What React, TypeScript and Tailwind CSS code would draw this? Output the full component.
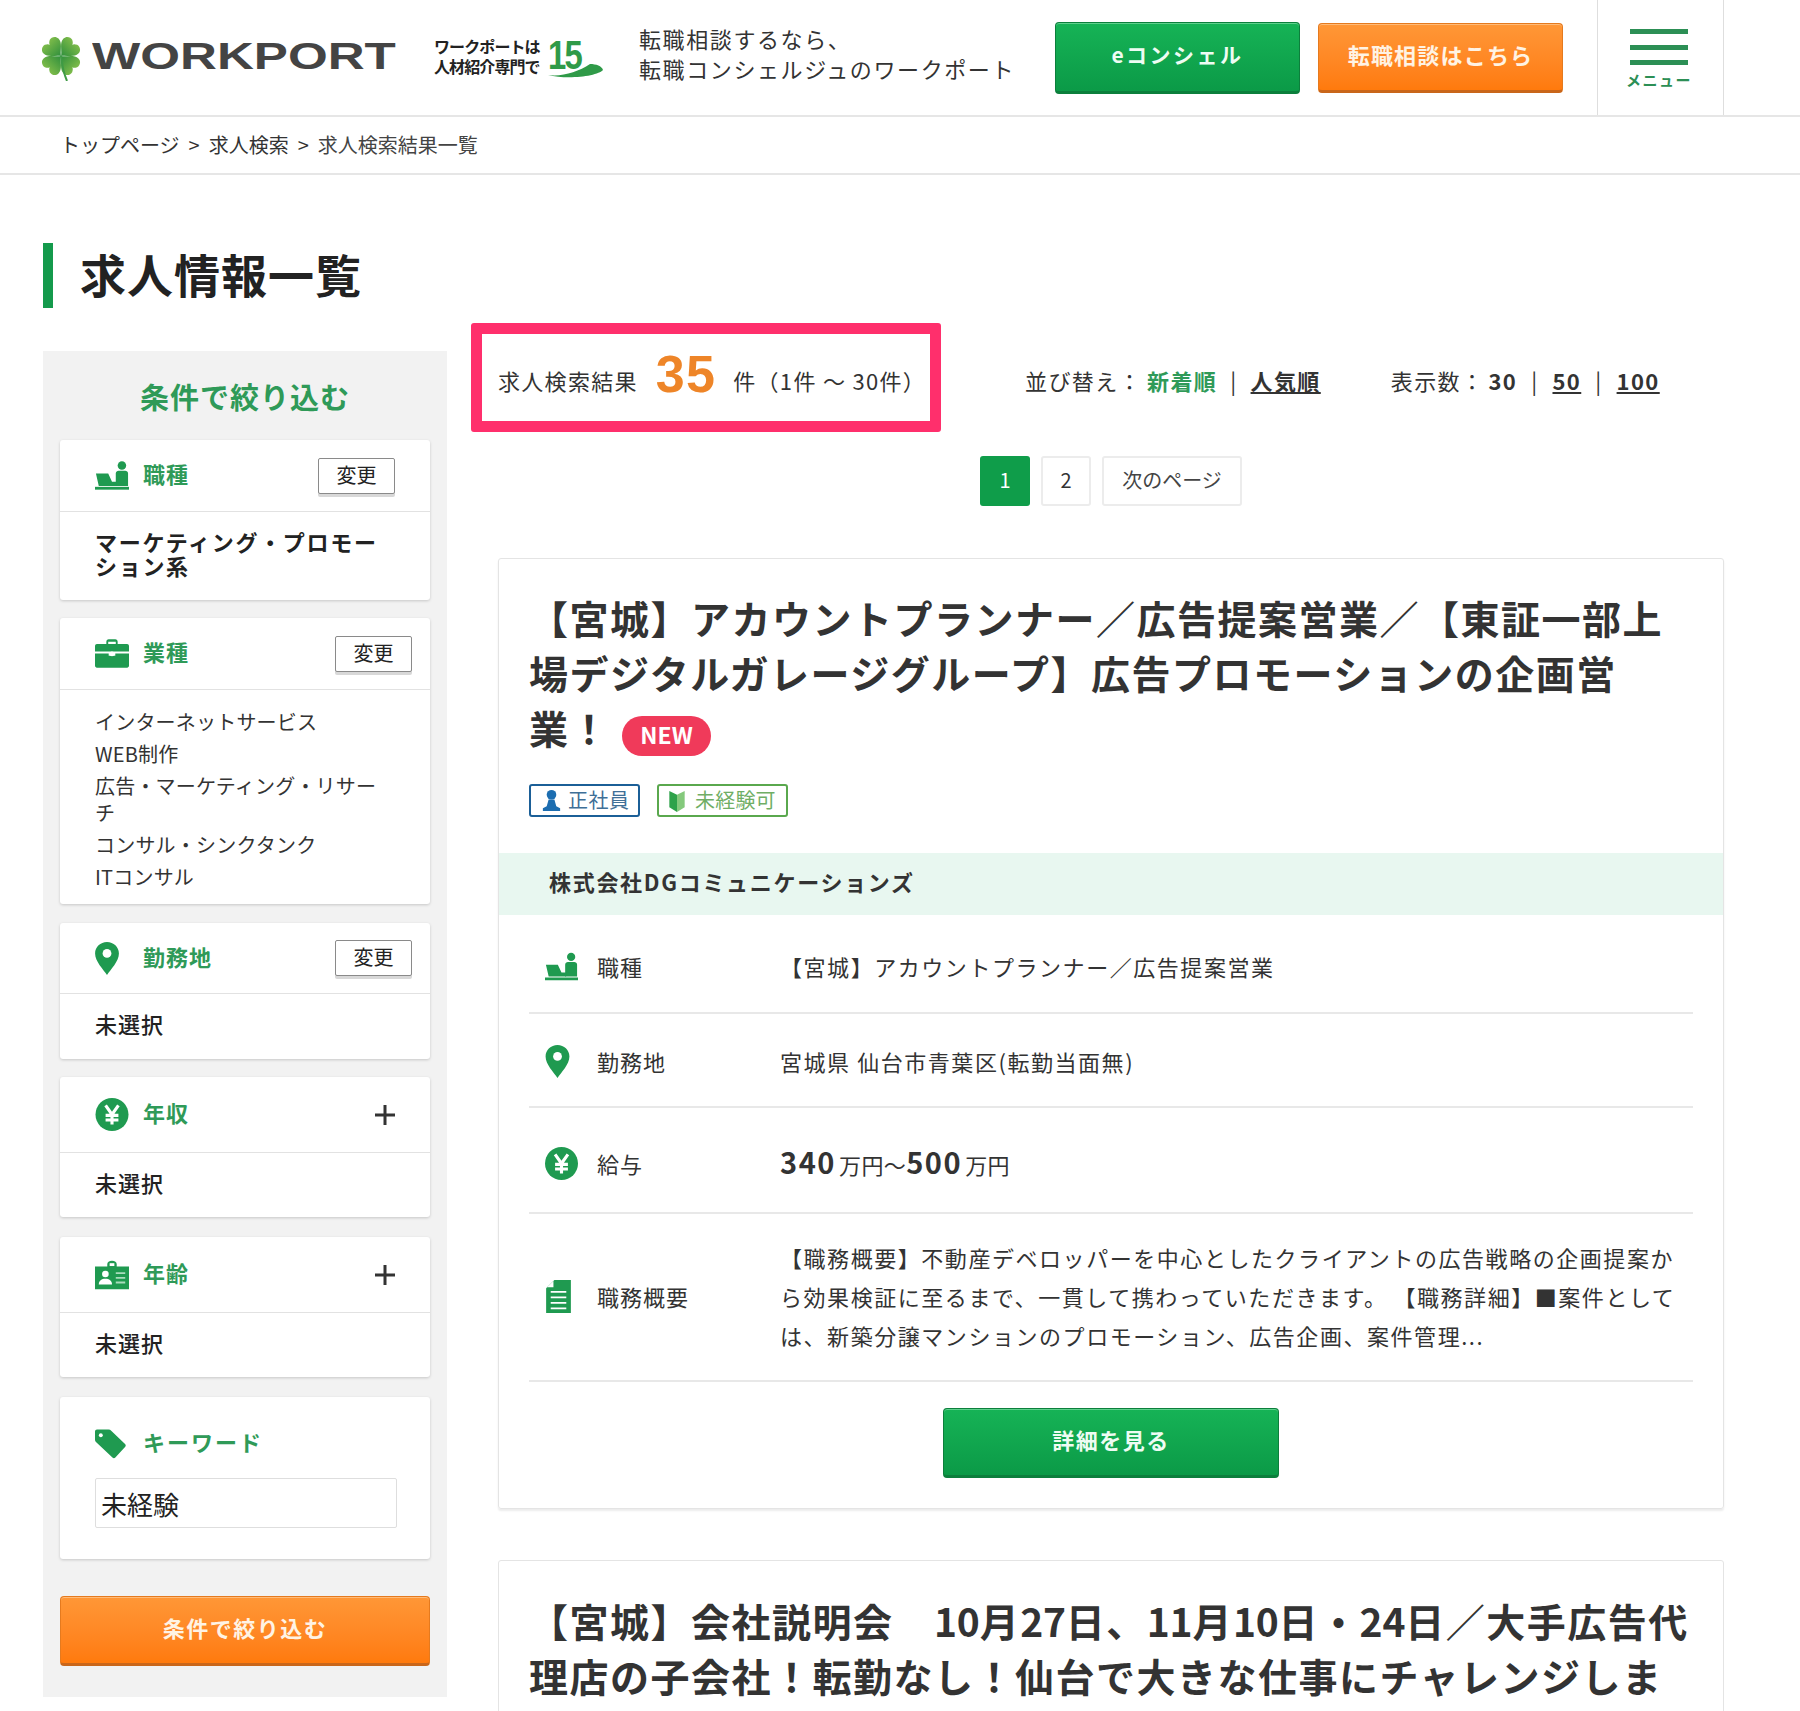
const FONT = "font-['Noto_Sans_CJK_JP','Noto_Sans',sans-serif]";

function Clover() {
  const leaf = "M0 0C-3 -5 -12 -9 -12 -16C-12 -21 -7 -23 -4 -22C-2 -21 -.5 -20 0 -18C.5 -20 2 -21 4 -22C7 -23 12 -21 12 -16C12 -9 3 -5 0 0Z";
  return (
    <svg viewBox="0 0 40 46" className="h-[46px] w-[40px] shrink-0">
      <defs>
        <linearGradient id="clover" x1="0" y1="0" x2="0" y2="1">
          <stop offset="0" stopColor="#7dbb4a" />
          <stop offset="1" stopColor="#2f8f3c" />
        </linearGradient>
      </defs>
      <path fill="url(#clover)" transform="translate(20 21) rotate(-45) scale(.88)" d={leaf} />
      <path fill="url(#clover)" transform="translate(20 21) rotate(45) scale(.88)" d={leaf} />
      <path fill="url(#clover)" transform="translate(20 21) rotate(-135) scale(.88)" d={leaf} />
      <path fill="url(#clover)" transform="translate(20 21) rotate(135) scale(.88)" d={leaf} />
      <path d="M20 21C21 30 23 39 26 46" stroke="#3f9a45" strokeWidth="2" fill="none" />
    </svg>
  );
}

function DeskIcon({ className }: { className: string }) {
  return (
    <svg viewBox="0 0 36 30" className={className} fill="#1f9a50">
      <circle cx="28.500" cy="4.500" r="4.500" />
      <path d="M22 13c0-2 1.500-3 3-3h7c1.500 0 3 1 3 3v13H22z" />
      <path d="M1 13h13l4 8.500h5V26H4z" />
      <rect x="0" y="27" width="36" height="3" />
    </svg>
  );
}

function BagIcon({ className }: { className: string }) {
  return (
    <svg viewBox="0 0 36 30" className={className} fill="#1f9a50">
      <path d="M12 5V2.500C12 1 13 0 14.500 0h7C23 0 24 1 24 2.500V5h-2V2.500h-8V5z" />
      <path d="M2 5h32c1 0 2 1 2 2v6H0V7c0-1 1-2 2-2z" />
      <path d="M0 15h14.500v2.500h7V15H36v13c0 1-1 2-2 2H2c-1 0-2-1-2-2z" />
      <circle cx="18" cy="15.500" r="2.500" fill="#fff" />
    </svg>
  );
}

function PinIcon({ className }: { className: string }) {
  return (
    <svg viewBox="0 0 26 36" className={className}>
      <path fill="#1f9a50" d="M13 0C5.800 0 0 5.500 0 12.500C0 21 9 30 13 36C17 30 26 21 26 12.500C26 5.500 20.200 0 13 0Z" />
      <circle cx="13" cy="12.500" r="4.800" fill="#fff" />
    </svg>
  );
}

function YenIcon({ className }: { className: string }) {
  return (
    <svg viewBox="0 0 36 36" className={className}>
      <circle cx="18" cy="18" r="18" fill="#1f9a50" />
      <path d="M11 8l7 10 7-10M18 18v11M11 19h14M11 24h14" stroke="#fff" strokeWidth="3.400" fill="none" />
    </svg>
  );
}

function CardIcon({ className }: { className: string }) {
  return (
    <svg viewBox="0 0 36 30" className={className}>
      <path fill="#1f9a50" d="M0 6h13V3.500C13 1.500 15 0 18 0s5 1.500 5 3.500V6h13v24H0z" />
      <rect x="15.500" y="2.500" width="5" height="3" fill="#fff" />
      <circle cx="11" cy="14" r="3.500" fill="#fff" />
      <path d="M4 25c0-4 3-6 7-6s7 2 7 6z" fill="#fff" />
      <path d="M22 13h10M22 18h10M22 23h10" stroke="#a9dcbc" strokeWidth="2" />
    </svg>
  );
}

function DocIcon({ className }: { className: string }) {
  return (
    <svg viewBox="0 0 27 36" className={className}>
      <path fill="#1f9a50" d="M9 0H27V36H0V9z" />
      <path d="M5 13h17M5 19h17M5 25h17M5 31h17" stroke="#fff" strokeWidth="2" />
      <path d="M8 1v7H1z" fill="#fff" />
    </svg>
  );
}

function TagIcon({ className }: { className: string }) {
  return (
    <svg viewBox="0 0 32 30" className={className}>
      <path fill="#1f9a50" d="M2 0h12c1 0 2 .5 3 1.500L31 15c1 1 1 2 0 3L21 29c-1 1-2 1-3 0L1 13c-.7-.7-1-1.500-1-2.500V2C0 1 1 0 2 0Z" />
      <circle cx="6" cy="6" r="2" fill="#fff" />
    </svg>
  );
}

function GreenButton({ className, children }: { className: string; children: React.ReactNode }) {
  return (
    <a className={`flex items-center justify-center rounded-[4px] border border-[#0c7f3c] border-b-[3px] bg-gradient-to-b from-[#16b356] to-[#0b9a47] pb-[5px] font-bold text-[#eefcf3] shadow-[inset_0_1px_0_#5fd08d] ${className}`}>
      {children}
    </a>
  );
}

function OrangeButton({ className, children }: { className: string; children: React.ReactNode }) {
  return (
    <a className={`flex items-center justify-center rounded-[4px] border border-[#e57a1e] border-b-[3px] border-b-[#c9661a] bg-gradient-to-b from-[#ff9736] to-[#ff7a0c] pb-[5px] font-bold text-[#fff3e4] shadow-[inset_0_1px_0_#ffbb78] ${className}`}>
      {children}
    </a>
  );
}

function ChangeButton({ className }: { className: string }) {
  return (
    <button className={`flex h-[36px] w-[77px] items-center justify-center rounded-[2px] border border-[#8a8a8a] bg-white pb-[2px] text-[20px] text-[#222] shadow-[0_3px_0_#d8d8d8] ${className}`}>
      変更
    </button>
  );
}

function SideCard({ header, children, className }: { header: React.ReactNode; children: React.ReactNode; className: string }) {
  return (
    <section className={`rounded-[3px] bg-white shadow-[0_1px_3px_rgba(0,0,0,0.18)] ${className}`}>
      <div className="relative flex items-center border-b border-[#e2e2e2] pl-[35px]">{header}</div>
      {children}
    </section>
  );
}

function SideLabel({ children, className }: { children: React.ReactNode; className: string }) {
  return <span className={`mb-[4px] text-[22px] font-bold tracking-[1px] text-[#2f9a58] ${className}`}>{children}</span>;
}

function Unselected() {
  return <p className="pl-[35px] text-[22px] font-medium leading-[59px] tracking-[1px] text-[#222]">未選択</p>;
}

function Plus() {
  return (
    <svg viewBox="0 0 20 20" className="absolute right-[35px] top-1/2 h-[20px] w-[20px] -translate-y-1/2" stroke="#333" strokeWidth="3">
      <path d="M0 10h20M10 0v20" />
    </svg>
  );
}

function Sidebar() {
  const industries = ["インターネットサービス", "WEB制作", "広告・マーケティング・リサーチ", "コンサル・シンクタンク", "ITコンサル"];
  return (
    <aside className="mt-[28px] h-[1346px] w-[404px] shrink-0 bg-[#f2f2f2] px-[17px] pt-[23px]">
      <h2 className="mb-[22px] text-center text-[29px] font-bold leading-[44px] tracking-[1px] text-[#2f9a58]">条件で絞り込む</h2>
      <SideCard className="h-[160px]" header={
        <div className="flex h-[71px] items-center">
          <DeskIcon className="h-[29px] w-[34px]" />
          <SideLabel className="ml-[14px]">職種</SideLabel>
          <ChangeButton className="absolute right-[35px] top-[18px]" />
        </div>
      }>
        <p className="mt-[17px] box-content w-[300px] pl-[35px] text-[22px] font-bold leading-[24px] tracking-[1.700px] text-[#222]">マーケティング・プロモーション系</p>
      </SideCard>
      <SideCard className="mt-[18px] h-[286px]" header={
        <div className="flex h-[71px] items-center">
          <BagIcon className="h-[29px] w-[34px]" />
          <SideLabel className="ml-[14px]">業種</SideLabel>
          <ChangeButton className="absolute right-[18px] top-[18px]" />
        </div>
      }>
        <ul className="mt-[18px] box-content w-[285px] pl-[35px] text-[20px] leading-[27px] tracking-[0.200px] text-[#333]">
          {industries.map((name) => <li key={name} className="pb-[5px]">{name}</li>)}
        </ul>
      </SideCard>
      <SideCard className="mt-[19px] h-[136px]" header={
        <div className="flex h-[70px] items-center">
          <PinIcon className="h-[33px] w-[24px]" />
          <SideLabel className="ml-[24px]">勤務地</SideLabel>
          <ChangeButton className="absolute right-[18px] top-[17px]" />
        </div>
      }>
        <Unselected />
      </SideCard>
      <SideCard className="mt-[18px] h-[140px]" header={
        <div className="flex h-[75px] items-center">
          <YenIcon className="h-[33px] w-[34px]" />
          <SideLabel className="ml-[14px]">年収</SideLabel>
          <Plus />
        </div>
      }>
        <Unselected />
      </SideCard>
      <SideCard className="mt-[20px] h-[140px]" header={
        <div className="flex h-[75px] items-center">
          <CardIcon className="h-[30px] w-[34px]" />
          <SideLabel className="ml-[14px]">年齢</SideLabel>
          <Plus />
        </div>
      }>
        <Unselected />
      </SideCard>
      <section className="mt-[20px] h-[162px] rounded-[3px] bg-white px-[35px] pt-[28px] shadow-[0_1px_3px_rgba(0,0,0,0.18)]">
        <div className="flex items-center">
          <TagIcon className="h-[30px] w-[31px]" />
          <span className="mb-[4px] ml-[17px] text-[22px] font-bold tracking-[2px] text-[#2f9a58]">キーワード</span>
        </div>
        <input readOnly value="未経験" className="mt-[16px] h-[50px] w-[302px] rounded-[2px] border border-[#dedede] bg-white px-[5px] text-[26px] text-[#222] outline-none" />
      </section>
      <OrangeButton className="mt-[37px] h-[70px] text-[22px] tracking-[1.500px]">条件で絞り込む</OrangeButton>
    </aside>
  );
}

function JobRow({ icon, label, h, children }: { icon: React.ReactNode; label: string; h: string; children: React.ReactNode }) {
  return (
    <div className={`flex items-center border-b-2 border-[#e8e8e8] ${h}`}>
      <div className="flex w-[16px] shrink-0" />
      <div className="flex w-[35px] shrink-0 items-center">{icon}</div>
      <span className="ml-[17px] w-[183px] shrink-0 text-[22px] tracking-[1px] text-[#333]">{label}</span>
      <div className="text-[22px] tracking-[1.550px] text-[#333]">{children}</div>
    </div>
  );
}

function JobTitle({ children }: { children: React.ReactNode }) {
  return <h3 className="text-[39px] font-bold leading-[55px] tracking-[1.500px] text-[#333]">{children}</h3>;
}

function Digits({ children }: { children: React.ReactNode }) {
  return <span className="tracking-[-0.200px]">{children}</span>;
}

function Results() {
  return (
    <main className="min-w-0 flex-1">
      <div className="flex items-center">
        <div className="flex h-[109px] w-[470px] shrink-0 items-center rounded-[3px] border-[11px] border-[#ff2f6c] pl-[16px] pt-[6px] text-[22px] tracking-[1.300px] text-[#333]">
          <span>求人検索結果</span>
          <span className="mb-[14px] ml-[18px] font-['Liberation_Sans',sans-serif] text-[52px] font-bold leading-none text-[#ee8528]">35</span>
          <span className="ml-[17px] whitespace-nowrap">件（1件 〜 30件）</span>
        </div>
        <div className="ml-[84px] flex items-center whitespace-nowrap pt-[6px] text-[22px] tracking-[1.400px] text-[#333]">
          <span>並び替え：</span>
          <span className="ml-[5px] font-bold text-[#2f9a58]">新着順</span>
          <span className="mx-[13px]">|</span>
          <a className="font-bold underline">人気順</a>
          <span className="ml-[70px]">表示数：</span>
          <span className="ml-[4px] font-bold">30</span>
          <span className="mx-[14px]">|</span>
          <a className="font-bold underline">50</a>
          <span className="mx-[14px]">|</span>
          <a className="font-bold underline">100</a>
        </div>
      </div>
      <nav className="ml-[27px] mt-[24px] flex w-[1226px] justify-center gap-[11px] text-[20px]">
        <a className="flex h-[50px] w-[50px] items-center justify-center rounded-[3px] bg-[#0f9d4a] pb-[3px] text-white">1</a>
        <a className="flex h-[50px] w-[50px] items-center justify-center rounded-[3px] border-2 border-[#ececec] pb-[3px] text-[#333]">2</a>
        <a className="flex h-[50px] w-[140px] items-center justify-center rounded-[3px] border-2 border-[#ececec] pb-[3px] text-[20px] text-[#444]">次のページ</a>
      </nav>
      <article className="ml-[27px] mt-[52px] h-[951px] w-[1226px] rounded-[3px] border border-[#e4e4e4] shadow-[0_2px_2px_rgba(0,0,0,0.08)]">
        <div className="px-[30px] pt-[31px]">
          <JobTitle>
            【宮城】アカウントプランナー／広告提案営業／【東証一部上場デジタルガレージグループ】広告プロモーションの企画営業！
            <span className="ml-[12px] inline-flex h-[40px] w-[89px] items-center justify-center rounded-full bg-[#f03a5a] pb-[2px] align-[0px] text-[23px] leading-none tracking-normal text-white">NEW</span>
          </JobTitle>
          <div className="mt-[28px] flex gap-[17px] text-[20px] leading-none">
            <span className="flex h-[33px] w-[111px] items-center gap-[6px] rounded-[3px] border-2 border-[#1b5f97] pl-[10px] tracking-[0.5px] text-[#3f6f97]">
              <svg viewBox="0 0 20 24" className="h-[23px] w-[21px] shrink-0" fill="#1c6db0">
                <circle cx="10" cy="6" r="5" />
                <path d="M7 11h6l2 7 4 2v3H1v-3l4-2z" />
              </svg>
              正社員
            </span>
            <span className="flex h-[33px] w-[131px] items-center gap-[9px] rounded-[3px] border-2 border-[#5aa84e] pl-[9px] tracking-[0.2px] text-[#6fae65]">
              <svg viewBox="0 0 18 24" className="h-[23px] w-[18px] shrink-0">
                <path d="M1 2l8 4v18l-8-5z" fill="#2ea24a" />
                <path d="M17 2L9 6v18l8-5z" fill="#84c97c" />
              </svg>
              未経験可
            </span>
          </div>
        </div>
        <div className="mt-[36px] flex h-[62px] items-center bg-[#e8f7f0] pb-[4px] pl-[50px] text-[22px] font-bold tracking-[1.700px] text-[#333]">株式会社DGコミュニケーションズ</div>
        <div className="px-[30px]">
          <JobRow h="h-[99px] pt-[6px]" label="職種" icon={<DeskIcon className="h-[29px] w-[33px]" />}>【宮城】アカウントプランナー／広告提案営業</JobRow>
          <JobRow h="h-[94px] pt-[3px]" label="勤務地" icon={<PinIcon className="h-[33px] w-[25px]" />}>宮城県 仙台市青葉区(転勤当面無)</JobRow>
          <JobRow h="h-[106px] pt-[8px]" label="給与" icon={<YenIcon className="h-[33px] w-[33px]" />}>
            <span className="text-[29px] font-bold leading-none">340</span>
            <span className="ml-[3px] tracking-[0.4px]">万円〜</span>
            <span className="text-[29px] font-bold leading-none">500</span>
            <span className="ml-[3px] tracking-[0.4px]">万円</span>
          </JobRow>
          <JobRow h="h-[168px]" label="職務概要" icon={<DocIcon className="h-[33px] w-[27px]" />}>
            <p className="w-[905px] leading-[39px]">【職務概要】不動産デベロッパーを中心としたクライアントの広告戦略の企画提案から効果検証に至るまで、一貫して携わっていただきます。<span className="inline-block w-[6px]" />【職務詳細】■案件としては、新築分譲マンションのプロモーション、広告企画、案件管理...</p>
          </JobRow>
        </div>
        <GreenButton className="mx-auto mt-[26px] h-[70px] w-[336px] text-[22px] tracking-[1.500px]">詳細を見る</GreenButton>
      </article>
      <article className="ml-[27px] mt-[51px] w-[1226px] rounded-t-[3px] border border-[#e4e4e4] px-[30px] pb-[60px] pt-[32px]">
        <JobTitle>
          【宮城】会社説明会　<Digits>10</Digits>月<Digits>27</Digits>日、<Digits>11</Digits>月<Digits>10</Digits>日・<Digits>24</Digits>日／大手広告代<br />
          理店の子会社！転勤なし！仙台で大きな仕事にチャレンジしま
        </JobTitle>
      </article>
    </main>
  );
}

export default function App() {
  return (
    <div className={`h-[1711px] overflow-hidden bg-white ${FONT}`}>
      <header className="flex h-[117px] items-center border-b-2 border-[#e6e6e6]">
        <div className="ml-[41px] flex items-center">
          <Clover />
          <span className="mb-[2px] ml-[11px] mr-[90px] inline-block w-[215px] origin-left scale-x-[1.42] whitespace-nowrap font-['Liberation_Sans',sans-serif] text-[36px] font-bold leading-none text-[#444]">WORKPORT</span>
        </div>
        <div className="ml-[37px] flex w-[170px] items-center">
          <p className="mb-[4px] w-[110px] whitespace-nowrap text-[16px] font-bold leading-[20px] tracking-[-0.9px] text-[#222]">ワークポートは<br />人材紹介専門で</p>
          <span className="relative ml-[4px] block h-[40px] w-[56px]">
            <span className="block origin-left scale-x-[0.82] font-['Liberation_Sans',sans-serif] text-[40px] font-bold leading-[34px] tracking-[-2px] text-[#2f9a48]">15</span>
            <svg viewBox="0 0 56 14" className="absolute bottom-0 left-0 h-[14px] w-[56px]">
              <path d="M0 11C14 13 30 8 42 0C48 0 54 2 55 6C50 12 20 16 0 11Z" fill="#2f9a48" />
            </svg>
          </span>
        </div>
        <p className="mb-[9px] ml-[35px] w-[416px] text-[22px] leading-[30px] tracking-[1.600px] text-[#333]">転職相談するなら、<br />転職コンシェルジュのワークポート</p>
        <GreenButton className="h-[72px] w-[245px] pt-[1px] text-[21px] tracking-[2.500px]">eコンシェル</GreenButton>
        <OrangeButton className="ml-[18px] h-[70px] w-[245px] text-[22px] tracking-[1.200px]">転職相談はこちら</OrangeButton>
        <div className="ml-[34px] flex h-full w-[127px] flex-col items-center border-x border-[#dedede] pr-[3px] pt-[29px]">
          <span className="h-[5px] w-[58px] bg-[#2c8f55]" />
          <span className="mt-[11px] h-[5px] w-[58px] bg-[#2c8f55]" />
          <span className="mt-[10px] h-[5px] w-[58px] bg-[#2c8f55]" />
          <span className="mt-[6px] text-[15px] font-bold leading-[18px] tracking-[1.500px] text-[#2c8f55]">メニュー</span>
        </div>
      </header>
      <nav className="flex h-[58px] items-center border-b-2 border-[#e6e6e6] pl-[60px] text-[20px] text-[#333]">
        トップページ <span className="mx-[9px]">&gt;</span> 求人検索 <span className="mx-[9px]">&gt;</span> <span className="text-[#444]">求人検索結果一覧</span>
      </nav>
      <h1 className="ml-[43px] mt-[68px] flex h-[65px] items-center border-l-[10px] border-[#149a4c] pb-[4px] pl-[27px] text-[46px] font-bold tracking-[1px] text-[#222]">求人情報一覧</h1>
      <div className="ml-[43px] mt-[15px] flex gap-[24px]">
        <Sidebar />
        <Results />
      </div>
    </div>
  );
}
